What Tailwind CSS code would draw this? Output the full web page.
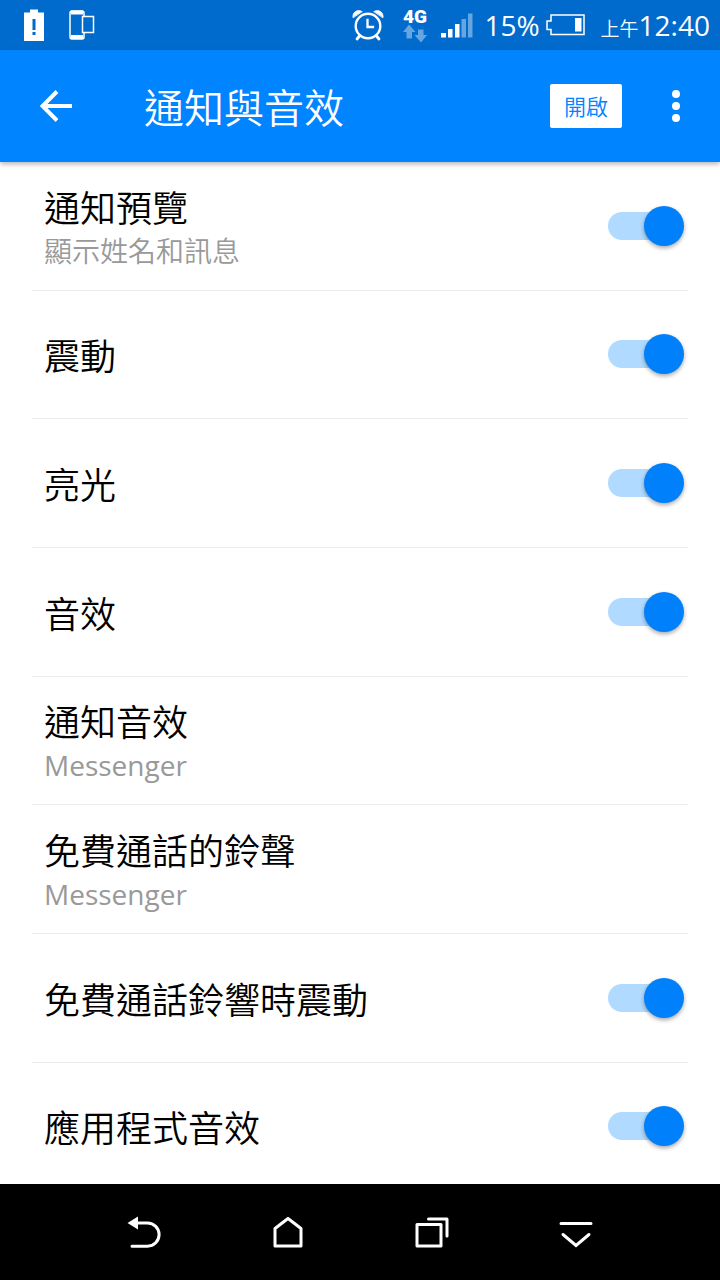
<!DOCTYPE html>
<html lang="zh-Hant">
<head>
  <meta charset="UTF-8" />
  <meta name="viewport" content="width=device-width, initial-scale=1.0"/>
  <title>通知與音效</title>
  <script src="https://cdn.jsdelivr.net/npm/@tailwindcss/browser@4"></script>
</head>
<body class="h-[1280px] w-[720px] overflow-hidden flex flex-col bg-white text-black font-['Open_Sans','Noto_Sans_CJK_TC',sans-serif]">

  <!-- Status bar -->
  <div class="h-[50px] shrink-0 bg-[#006bcc] text-white flex items-center pl-6 pr-[10px]">
    <svg class="w-5 h-8 shrink-0" viewBox="0 0 20 32" fill="#fff">
      <path d="M6 0.5h8v3h6V32H0V3.5h6z"/>
      <path d="M8.500 10h3v11h-3zM8.500 23h3v3h-3z" fill="#006bcc"/>
    </svg>
    <svg class="w-[26px] h-[30px] shrink-0 ml-[25px]" viewBox="0 0 26 30" fill="none" stroke="#fff">
      <path d="M3 1h10q2 0 2 2v24q0 2-2 2H3q-2 0-2-2V3q0-2 2-2z" stroke-width="1.500"/>
      <path d="M2 2.500h12M2 27h12" stroke-width="4"/>
      <path d="M12.500 6h13v17h-13z" fill="#006bcc" stroke="none"/>
      <path d="M13.500 6.500h11v16h-11z" stroke-width="1.500"/>
    </svg>

    <svg class="w-8 h-8 shrink-0 ml-auto" viewBox="0 0 32 32" fill="none" stroke="#fff" stroke-linecap="round">
      <circle cx="16" cy="17" r="12.300" stroke-width="2.400"/>
      <path d="M15.500 11v7h5.500" stroke-width="2.300" stroke-linecap="square"/>
      <path d="M7.500 27l-2.500 3M24.500 27l2.500 3" stroke-width="2.800"/>
      <path d="M1 8.500C0 4 5 -0.500 10 2.500zM31 8.500C32 4 27 -0.500 22 2.500z" fill="#fff" stroke="#fff" stroke-width="0.800"/>
    </svg>
    <svg class="w-[26px] h-[46px] shrink-0 ml-[18px]" viewBox="0 0 26 46">
      <text x="1" y="20.500" textLength="24" lengthAdjust="spacingAndGlyphs" fill="#fff" class="font-[Roboto] font-black text-[19px]">4G</text>
      <path d="M7 22.500l6.500 7.500h-3.500v6.500h-5.500V30H1zM19 40.500L12.500 33H16v-5.500h5.500V33H25z" fill="#66a6e0"/>
    </svg>
    <svg class="w-8 h-[26px] shrink-0 ml-[13px]" viewBox="0 0 32 26" fill="#fff">
      <path d="M0 21h5v4.500H0zM7 17h4.500v8.500H7zM14 12h4.500v13.500H14z"/>
      <path d="M20.500 7H25v18.500h-4.500zM27 1.500h4.500v24H27z" fill="#66a6e0"/>
    </svg>
    <span class="ml-3 w-[54px] text-[28px] leading-[50px]">15%</span>
    <svg class="w-10 h-[22px] shrink-0 ml-[7px]" viewBox="0 0 40 22">
      <path d="M5 1h33v19.500H5v-5H1V7h4z" fill="none" stroke="#fff" stroke-width="1.500"/>
      <path d="M29 4h6.500v13.500H29z" fill="#fff"/>
    </svg>
    <span class="ml-[15px] pt-1 text-[28px] leading-[50px] whitespace-nowrap"><span class="text-[19px] font-[350]">上午</span>12:40</span>
  </div>

  <!-- App bar -->
  <header class="h-28 shrink-0 bg-[#0084ff] text-white flex items-center pl-10 pr-10 shadow-[0_2px_5px_rgba(0,0,0,0.3)] z-10">
    <svg class="w-8 h-8 shrink-0" viewBox="0 0 32 32" fill="none" stroke="#fff" stroke-width="4">
      <path d="M32 16H3M17 1.500L2.500 16L17 30.500"/>
    </svg>
    <h1 class="ml-[72px] pt-1 text-[40px] leading-none font-[350] whitespace-nowrap">通知與音效</h1>
    <button class="ml-auto w-[72px] h-11 rounded-[2px] bg-white text-[#0084ff] text-[22px] leading-none font-[350]">開啟</button>
    <div class="ml-[50px] flex flex-col gap-1">
      <i class="size-2 rounded-full bg-white"></i>
      <i class="size-2 rounded-full bg-white"></i>
      <i class="size-2 rounded-full bg-white"></i>
    </div>
  </header>

  <!-- Settings list -->
  <main id="list" class="flex-1 min-h-0 overflow-hidden px-8"></main>

  <!-- Navigation bar -->
  <nav class="h-24 shrink-0 bg-black flex items-center justify-center gap-[108px] pt-px">
    <svg class="size-9" viewBox="0 0 36 36" fill="none" stroke="#fff" stroke-width="3" stroke-linecap="round">
      <path d="M11 8h10.500a11.600 11.600 0 0 1 0 23.200H6"/>
      <path d="M1.500 8L12 1.500v13z" fill="#fff" stroke="none"/>
    </svg>
    <svg class="size-9" viewBox="0 0 36 36" fill="none" stroke="#fff" stroke-width="3" stroke-linejoin="round">
      <path d="M5 31V13.500L18 3.500l13 10V31z"/>
    </svg>
    <svg class="size-9" viewBox="0 0 36 36" fill="none" stroke="#fff" stroke-width="3" stroke-linecap="round" stroke-linejoin="round">
      <path d="M3 9.500h24V31H3zM14.500 4H33v17"/>
    </svg>
    <svg class="size-9" viewBox="0 0 36 36" fill="none" stroke="#fff" stroke-width="3" stroke-linecap="round">
      <path d="M3 8.500h30M5 19.500l13 11 13-11"/>
    </svg>
  </nav>

  <script>
    const items = [
      { title: '通知預覽', sub: '顯示姓名和訊息', toggle: true },
      { title: '震動', toggle: true },
      { title: '亮光', toggle: true },
      { title: '音效', toggle: true },
      { title: '通知音效', sub: 'Messenger' },
      { title: '免費通話的鈴聲', sub: 'Messenger' },
      { title: '免費通話鈴響時震動', toggle: true },
      { title: '應用程式音效', toggle: true },
    ];

    const toggle = `
      <div class="relative w-[76px] h-10 flex items-center">
        <div class="w-16 h-7 rounded-full bg-[#b0daff]"></div>
        <div class="absolute right-0 top-0 size-10 rounded-full bg-[#0080fa] shadow-[0_2px_4px_rgba(0,0,0,0.35)]"></div>
      </div>`;

    document.getElementById('list').innerHTML = items.map(item => `
      <div class="h-[128.670px] border-b border-[#ebebeb] flex items-center justify-between pl-3 pr-1">
        <div class="pt-[6px]">
          <div class="text-[36px] leading-[44px] font-[350]">${item.title}</div>
          ${item.sub ? `<div class="text-[28px] leading-[40px] text-[#999]"><span class="${/^\w/.test(item.sub) ? 'font-normal' : 'font-[350]'}">${item.sub}</span></div>` : ''}
        </div>
        ${item.toggle ? toggle : ''}
      </div>`).join('');
  </script>
</body>
</html>
